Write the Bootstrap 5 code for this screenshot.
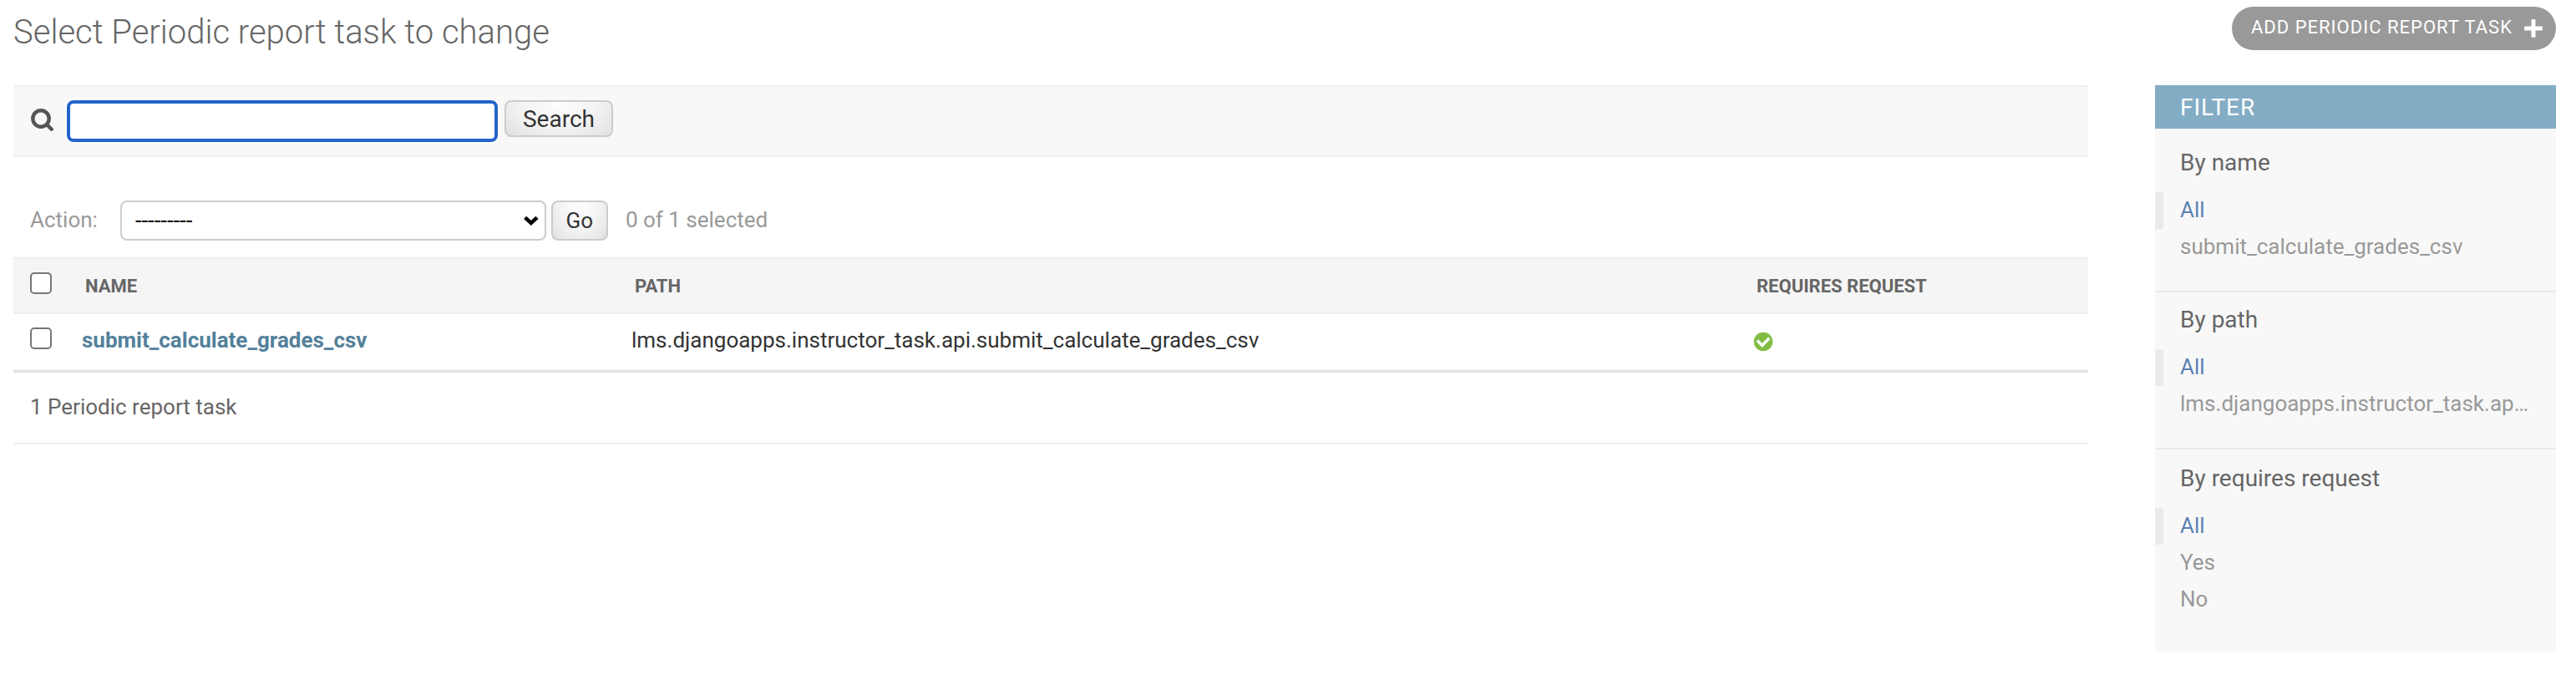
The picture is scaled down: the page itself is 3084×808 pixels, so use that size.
<!DOCTYPE html>
<html lang="en">
<head>
<meta charset="utf-8">
<title>Select Periodic report task to change</title>
<link rel="stylesheet" href="https://cdn.jsdelivr.net/npm/bootstrap@5.3.0/dist/css/bootstrap.min.css">
<style>
body{font-family:Roboto,"Liberation Sans",sans-serif;font-size:26px;line-height:30px;color:#333;background:#fff;width:3084px;height:808px;overflow:hidden}
.page{padding:0 24px 0 16px}
.topbar{height:102px}
h1{font-size:40px;font-weight:300;line-height:46px;color:#666;margin:16px 0 0}
.addlink{margin-top:8px;height:52px;width:388px;padding:0 16px 0 23px;background:#999;color:#fff;font-size:22px;letter-spacing:1px;border-radius:26px;line-height:50px}
.changelist{width:2484px}
.searchbar{height:86px;background:#f8f8f8;border-top:2px solid #eee;border-bottom:2px solid #eee;padding:16px 0 0 20px}
.searchbar svg{margin:10px 16px 0 0}
.query{width:516px;height:50px;border:4px solid #2463c9;border-radius:8px;background:#fff;box-shadow:0 0 0 2px #fff;padding:0 8px;outline:0}
.push{border:2px solid #ccc;border-radius:8px;background:radial-gradient(ellipse at 50% 0,#fdfdfd,#f4f4f4 50%,#e1e1e1);color:#333;padding:0}
.push.find{width:130px;height:44px;font-size:28px;line-height:33px;padding-top:1px}
.push.go{width:68px;height:48px;margin-left:6px;line-height:30px}
.actions{height:120px;padding:52px 0 0 20px;color:#999}
.picker{width:510px;height:48px;margin-left:27px;border:2px solid #ccc;border-radius:8px;background:#fff;color:#000;padding:0 7px 0 16px}
.counter{margin-left:21px}
.results{width:2484px;table-layout:fixed;border-collapse:separate;border-spacing:0}
.results th,.results td{padding:0;vertical-align:top}
.results thead th{height:68px;background:#f5f5f5;border-top:2px solid #eee;border-bottom:2px solid #eee;color:#666;font-size:22px;line-height:26px;padding:20px 0 0 4px}
.results thead th:first-child{padding:16px 0 0}
.results tbody>tr>*{height:68px;border-bottom:2px solid #eee;padding-top:16px}
.box{display:block;width:26px;height:26px;border:2px solid #767676;border-radius:5px;background:#fff;margin-left:20px}
.results a{color:#53809b;text-decoration:none;font-weight:700}
.results td svg{margin-top:5px}
.paginator{height:88px;border-top:2px solid #ddd;border-bottom:2px solid #eee;color:#666;padding:26px 0 0 20px}
.filters{width:480px;height:678px;background:#f8f8f8}
.filters h2{height:52px;background:#83acc5;color:#fff;font-size:28px;font-weight:400;letter-spacing:1px;line-height:54px;margin:0;padding-left:30px}
.filters h3{font-size:28px;font-weight:400;color:#666;line-height:32px;margin:0 0 19px;padding-left:30px}
.group{border-bottom:2px solid #eaeaea;padding-top:17px;height:188px}
.group.opening{height:196px;padding-top:25px}
.group:last-child{border:0;padding-top:19px}
.group li{height:44px;line-height:30px;padding:6px 30px 8px;color:#999}
.group li.selected{border-left:10px solid #eaeaea;padding-left:20px;color:#5b80b2}
</style>
<script src="https://cdn.jsdelivr.net/npm/bootstrap@5.3.0/dist/js/bootstrap.bundle.min.js"></script>
</head>
<body>
<div class="page">
  <header class="topbar d-flex justify-content-between align-items-start">
    <h1>Select Periodic report task to change</h1>
    <a class="addlink d-flex justify-content-between align-items-start text-decoration-none" href="#"><span>ADD PERIODIC REPORT TASK</span>
      <svg class="align-self-center" width="22" height="22" viewBox="0 0 22 22"><path d="M11 2.700v16.600M2.700 11h16.600" stroke="#fff" stroke-width="5" stroke-linecap="square"/></svg></a>
  </header>
  <div class="d-flex justify-content-between align-items-start">
    <main class="changelist">
      <form class="searchbar d-flex align-items-start">
        <svg width="28" height="28" viewBox="0 0 28 28" fill="none" stroke="#555"><circle cx="13" cy="12" r="9.700" stroke-width="4.400"/><path d="M20 19l5.700 5.700" stroke-width="4.400" stroke-linecap="round"/></svg>
        <input class="query" type="text" aria-label="Search">
        <button class="push find ms-2" type="button">Search</button>
      </form>
      <div class="actions d-flex align-items-start">
        <span class="mt-2">Action:</span>
        <div class="picker d-flex align-items-center justify-content-between"><span style="font-size:27.5px">---------</span>
          <svg width="20" height="14" viewBox="0 0 20 14"><path d="M3.600 3.300l7.200 6.700 7.200-6.700" fill="none" stroke="#000" stroke-width="4.500"/></svg></div>
        <button class="push go" type="button">Go</button>
        <span class="counter mt-2">0 of 1 selected</span>
      </div>
      <table class="results">
        <colgroup><col style="width:82px"><col style="width:658px"><col style="width:1343px"><col></colgroup>
        <thead><tr><th><span class="box"></span></th><th>NAME</th><th>PATH</th><th>REQUIRES REQUEST</th></tr></thead>
        <tbody><tr><td><span class="box"></span></td><td><a href="#">submit_calculate_grades_csv</a></td><td>lms.djangoapps.instructor_task.api.submit_calculate_grades_csv</td>
        <td><svg class="d-block" width="24" height="24" viewBox="0 0 24 24"><circle cx="12" cy="12" r="11.300" fill="#83bc45"/><path d="M6 11.700l4.700 4.700 7.300-7.400" fill="none" stroke="#fff" stroke-width="3.500" stroke-linecap="square"/></svg></td></tr></tbody>
      </table>
      <div class="paginator">1 Periodic report task</div>
    </main>
    <aside class="filters">
      <h2>FILTER</h2>
      <section class="group opening"><h3>By name</h3><ul class="list-unstyled m-0"><li class="selected">All</li><li>submit_calculate_grades_csv</li></ul></section>
      <section class="group"><h3>By path</h3><ul class="list-unstyled m-0"><li class="selected">All</li><li class="text-nowrap">lms.djangoapps.instructor_task.ap…</li></ul></section>
      <section class="group"><h3>By requires request</h3><ul class="list-unstyled m-0"><li class="selected">All</li><li>Yes</li><li>No</li></ul></section>
    </aside>
  </div>
</div>
</body>
</html>
